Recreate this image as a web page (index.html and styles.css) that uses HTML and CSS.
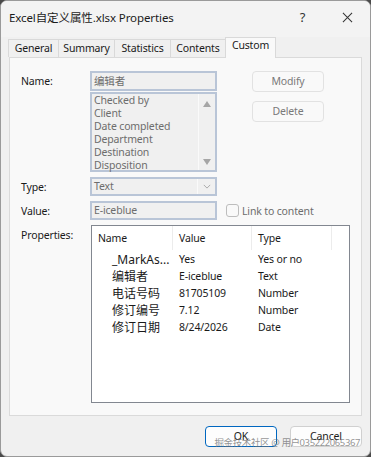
FILE: index.html
```html
<!DOCTYPE html>
<html lang="zh-CN">
<head>
    <meta charset="UTF-8">
    <title>Excel自定义属性.xlsx Properties</title>
    <link rel="stylesheet" href="styles.css">
</head>
<body>
    <div class="window">
        <!-- 標題列 -->
        <div class="titlebar">
            <span class="title">Excel自定义属性.xlsx Properties</span>
            <span class="title-btn help">?</span>
            <span class="title-btn close">
                <svg viewBox="0 0 12 12"><path d="M1 1L11 11M11 1L1 11"/></svg>
            </span>
        </div>

        <!-- 頁籤 -->
        <div class="tabs">
            <div class="tab t-general">General</div>
            <div class="tab t-summary">Summary</div>
            <div class="tab t-stats">Statistics</div>
            <div class="tab t-contents">Contents</div>
            <div class="tab t-custom active">Custom</div>
        </div>

        <div class="panel">
            <div class="row">
                <div class="label name-label">Name:</div>
                <div class="name-col">
                    <div class="field">编辑者</div>
                    <div class="listbox">
                        <div class="list-items">
                            <div>Checked by</div>
                            <div>Client</div>
                            <div>Date completed</div>
                            <div>Department</div>
                            <div>Destination</div>
                            <div>Disposition</div>
                        </div>
                        <div class="list-scroll">
                            <span class="arrow up"></span>
                            <span class="arrow down"></span>
                        </div>
                    </div>
                </div>
                <div class="side-btns">
                    <div class="btn disabled">Modify</div>
                    <div class="btn disabled">Delete</div>
                </div>
            </div>

            <div class="row type-row">
                <div class="label">Type:</div>
                <div class="field combo">
                    <span>Text</span>
                    <span class="combo-btn">
                        <svg viewBox="0 0 10 6"><path d="M1 1L5 5L9 1"/></svg>
                    </span>
                </div>
            </div>

            <div class="row value-row">
                <div class="label">Value:</div>
                <div class="field">E-iceblue</div>
                <label class="check">
                    <span class="box"></span>
                    <span>Link to content</span>
                </label>
            </div>

            <div class="row props-row">
                <div class="label props-label">Properties:</div>
                <div class="props">
                    <div class="props-head">
                        <div class="col c-name">Name</div>
                        <div class="col c-value">Value</div>
                        <div class="col c-type">Type</div>
                        <div class="col c-rest"></div>
                    </div>
                    <div class="prop"><span class="c-name">_MarkAs...</span><span class="c-value">Yes</span><span class="c-type">Yes or no</span></div>
                    <div class="prop"><span class="c-name">编辑者</span><span class="c-value">E-iceblue</span><span class="c-type">Text</span></div>
                    <div class="prop"><span class="c-name">电话号码</span><span class="c-value">81705109</span><span class="c-type">Number</span></div>
                    <div class="prop"><span class="c-name">修订编号</span><span class="c-value">7.12</span><span class="c-type">Number</span></div>
                    <div class="prop"><span class="c-name">修订日期</span><span class="c-value">8/24/2026</span><span class="c-type">Date</span></div>
                </div>
            </div>
        </div>

        <!-- 底部按鈕 -->
        <div class="footer">
            <div class="btn primary">OK</div>
            <div class="btn">Cancel</div>
            <span class="watermark">掘金技术社区 @ 用户035222065367</span>
        </div>
    </div>
</body>
</html>
```

FILE: styles.css
```css
* {
    margin: 0;
    padding: 0;
    box-sizing: border-box;
}

body {
    width: 371px;
    height: 457px;
    background: #4a4a4a;
    font-family: 'Noto Sans', 'Noto Sans CJK SC', sans-serif;
    font-size: 10.5px;
    letter-spacing: -0.15px;
    color: #1a1a1a;
    overflow: hidden;
}

.window {
    position: relative;
    width: 371px;
    height: 457px;
    background: #f0f0f0;
    border: 1px solid #9a9a9a;
    border-radius: 7px;
    overflow: hidden;
}

/* 標題列 */
.titlebar {
    height: 36px;
    display: flex;
    align-items: center;
    padding-left: 8px;
    background: #f3f3f3;
}

.title {
    flex: 1;
    font-size: 11.5px;
    letter-spacing: -0.1px;
    color: #1b1b1b;
    margin-top: -4px;
}

.title-btn {
    width: 46px;
    text-align: center;
    margin-top: -4px;
}

.help {
    font-size: 13px;
    color: #333;
    padding-left: 3px;
}

.close svg {
    width: 11px;
    height: 11px;
    stroke: #333;
    stroke-width: 1.1;
    fill: none;
    display: block;
    margin: 0 auto;
}

/* 頁籤 */
.tabs {
    display: flex;
    align-items: flex-end;
    padding-left: 7px;
    height: 20px;
}

.tab {
    height: 18px;
    border: 1px solid #d9d9d9;
    border-bottom: none;
    border-right: none;
    background: #f0f0f0;
    line-height: 16px;
    text-align: center;
    color: #1a1a1a;
}

.t-general { width: 50px; }
.t-summary { width: 56px; }
.t-stats { width: 56px; }
.t-contents { width: 55px; }

.tab.active {
    width: 51px;
    height: 21px;
    background: #f9f9f9;
    border-right: 1px solid #d9d9d9;
    line-height: 15px;
    margin-bottom: -1px;
    position: relative;
}

.panel {
    margin: 0 8px;
    height: 359px;
    background: #f9f9f9;
    border: 1px solid #dadada;
    padding: 13px 0 0 11px;
}

.row {
    display: flex;
    align-items: flex-start;
}

.label {
    width: 69px;
    color: #1a1a1a;
}

.name-label {
    padding-top: 3px;
}

.field {
    width: 127px;
    height: 20px;
    border: 2px solid #b9c5d7;
    background: #f0f0f0;
    color: #6d6d6d;
    padding-left: 2px;
    line-height: 16px;
}

.name-col {
    width: 127px;
}

.listbox {
    margin-top: 1px;
    height: 80px;
    border: 2px solid #b9c5d7;
    background: #f0f0f0;
    color: #6d6d6d;
    display: flex;
}

.list-items {
    flex: 1;
    padding-left: 2px;
    line-height: 13px;
}

.list-scroll {
    width: 17px;
    border-left: 1px solid #fafafa;
    display: flex;
    flex-direction: column;
    justify-content: space-between;
    align-items: center;
    padding: 7px 0 5px;
}

.arrow {
    width: 0;
    height: 0;
    border-left: 4px solid transparent;
    border-right: 4px solid transparent;
}

.arrow.up {
    border-bottom: 6px solid #a6a6a6;
}

.arrow.down {
    border-top: 6px solid #a6a6a6;
}

.side-btns {
    margin-left: 35px;
    display: flex;
    flex-direction: column;
    gap: 9px;
}

.btn {
    width: 72px;
    height: 21px;
    border: 1px solid #d0d0d0;
    border-radius: 4px;
    background: #fdfdfd;
    text-align: center;
    line-height: 19px;
    color: #1a1a1a;
}

.btn.disabled {
    color: #7a7a7a;
    background: #f9f9f9;
    border-color: #e2e2e2;
}

.type-row {
    margin-top: 5px;
    align-items: center;
}

.combo {
    height: 19px;
    display: flex;
    justify-content: space-between;
    line-height: 15px;
}

.combo-btn {
    width: 18px;
    border-left: 1px solid #fafafa;
    display: flex;
    align-items: center;
    justify-content: center;
}

.combo-btn svg {
    width: 8px;
    height: 5px;
    stroke: #9a9a9a;
    fill: none;
    stroke-width: 1;
}

.value-row {
    margin-top: 5px;
    align-items: center;
}

.value-row .field {
    height: 19px;
    line-height: 15px;
}

.check {
    display: flex;
    align-items: center;
    margin-left: 9px;
    color: #6d6d6d;
    gap: 3px;
}

.box {
    width: 13px;
    height: 13px;
    border: 1px solid #bdbdbd;
    border-radius: 3px;
    background: #f9f9f9;
}

.props-row {
    margin-top: 5px;
}

.props-label {
    padding-top: 3px;
}

.props {
    width: 259px;
    height: 178px;
    border: 1px solid #828790;
    background: #fff;
    margin-left: 1px;
}

.props-head {
    display: flex;
    height: 24px;
    line-height: 25px;
}

.props-head .col {
    border-right: 1px solid #ececec;
    padding-left: 6px;
}

.c-name {
    width: 81px;
}

.c-value {
    width: 79px;
}

.c-type {
    width: 80px;
}

.props-head .c-rest {
    flex: 1;
    border-right: none;
}

.prop {
    display: flex;
    height: 17px;
    line-height: 17px;
}

.props-head + .prop {
    margin-top: 1px;
}

.prop span {
    padding-left: 6px;
    white-space: nowrap;
}

.prop .c-name {
    padding-left: 20px;
    font-size: 12px;
    letter-spacing: 0;
}

/* 底部按鈕 */
.footer {
    display: flex;
    justify-content: flex-end;
    gap: 13px;
    padding: 10px 8px 0 0;
    position: relative;
}

.btn.primary {
    border: 1.5px solid #0067c0;
}

.watermark {
    position: absolute;
    right: 10px;
    top: 19px;
    font-size: 9.5px;
    letter-spacing: -0.4px;
    color: rgba(110, 110, 110, 0.75);
    pointer-events: none;
    white-space: nowrap;
}
```
